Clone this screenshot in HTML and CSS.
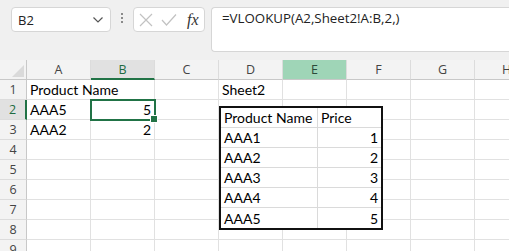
FILE: index.html
```html
<!DOCTYPE html>
<html>
<head>
<meta charset="utf-8">
<link rel="stylesheet" href="styles.css">
</head>
<body>
<div class="topbar">
  <div class="namebox">
    <span class="name">B2</span>
    <svg class="chev" width="12" height="8" viewBox="0 0 12 8"><path d="M1.5 1.5 L6 6 L10.5 1.5" fill="none" stroke="#555" stroke-width="1.2"/></svg>
  </div>
  <div class="dots"><i></i><i></i><i></i></div>
  <div class="btnbox">
    <svg width="14" height="14" viewBox="0 0 14 14"><path d="M1 1 L13 13 M13 1 L1 13" stroke="#c2c2c2" stroke-width="1.2" fill="none"/></svg>
    <svg width="16" height="14" viewBox="0 0 16 14"><path d="M1 7 L5.5 12 L15 1.5" stroke="#c2c2c2" stroke-width="1.2" fill="none"/></svg>
    <span class="fx">fx</span>
  </div>
  <div class="formula">=VLOOKUP(A2,Sheet2!A:B,2,)</div>
</div>
<div class="sheet">
  <div class="grid">
    <div class="hd corner"><span class="tri"></span></div>
    <div class="hd">A</div>
    <div class="hd selcol">B</div>
    <div class="hd">C</div>
    <div class="hd">D</div>
    <div class="hd hl">E</div>
    <div class="hd">F</div>
    <div class="hd">G</div>
    <div class="hd">H</div>

    <div class="rh">1</div>
    <div class="c ov">Product Name</div><div class="c"></div><div class="c"></div><div class="c">Sheet2</div><div class="c"></div><div class="c"></div><div class="c"></div><div class="c"></div>

    <div class="rh selrow">2</div>
    <div class="c">AAA5</div><div class="c num sel">5<span class="handle"></span></div><div class="c"></div><div class="c"></div><div class="c"></div><div class="c"></div><div class="c"></div><div class="c"></div>

    <div class="rh">3</div>
    <div class="c">AAA2</div><div class="c num">2</div><div class="c"></div><div class="c"></div><div class="c"></div><div class="c"></div><div class="c"></div><div class="c"></div>

    <div class="rh">4</div>
    <div class="c"></div><div class="c"></div><div class="c"></div><div class="c"></div><div class="c"></div><div class="c"></div><div class="c"></div><div class="c"></div>
    <div class="rh">5</div>
    <div class="c"></div><div class="c"></div><div class="c"></div><div class="c"></div><div class="c"></div><div class="c"></div><div class="c"></div><div class="c"></div>
    <div class="rh">6</div>
    <div class="c"></div><div class="c"></div><div class="c"></div><div class="c"></div><div class="c"></div><div class="c"></div><div class="c"></div><div class="c"></div>
    <div class="rh">7</div>
    <div class="c"></div><div class="c"></div><div class="c"></div><div class="c"></div><div class="c"></div><div class="c"></div><div class="c"></div><div class="c"></div>
    <div class="rh">8</div>
    <div class="c"></div><div class="c"></div><div class="c"></div><div class="c"></div><div class="c"></div><div class="c"></div><div class="c"></div><div class="c"></div>
    <div class="rh">9</div>
    <div class="c"></div><div class="c"></div><div class="c"></div><div class="c"></div><div class="c"></div><div class="c"></div><div class="c"></div><div class="c"></div>
  </div>

  <div class="picture">
    <div class="pc">Product Name</div><div class="pc">Price</div>
    <div class="pc">AAA1</div><div class="pc num">1</div>
    <div class="pc">AAA2</div><div class="pc num">2</div>
    <div class="pc">AAA3</div><div class="pc num">3</div>
    <div class="pc">AAA4</div><div class="pc num">4</div>
    <div class="pc">AAA5</div><div class="pc num">5</div>
  </div>
</div>
</body>
</html>
```

FILE: styles.css
```css
html, body {
  margin: 0;
  padding: 0;
  width: 509px;
  height: 251px;
  overflow: hidden;
  background: #ffffff;
}

.topbar {
  height: 60px;
  background: #f0f0f0;
  display: flex;
  align-items: flex-start;
  box-sizing: border-box;
  padding-top: 7px;
  padding-left: 11px;
  font-family: "Open Sans", "Liberation Sans", sans-serif;
}

.topbar > * {
  flex-shrink: 0;
}

.namebox {
  width: 100px;
  height: 25px;
  box-sizing: border-box;
  background: #ffffff;
  border: 1px solid #d6d6d6;
  border-radius: 4px;
  display: flex;
  align-items: center;
  justify-content: space-between;
  padding: 0 6px 0 6px;
}

.name {
  font-size: 13px;
  color: #222;
}

.dots {
  width: 22px;
  display: flex;
  flex-direction: column;
  align-items: center;
  gap: 2px;
  padding-top: 6px;
}

.dots i {
  display: block;
  width: 2px;
  height: 2px;
  background: #8a8a8a;
}

.btnbox {
  width: 72px;
  height: 25px;
  box-sizing: border-box;
  background: #ffffff;
  border: 1px solid #d6d6d6;
  border-radius: 4px;
  display: flex;
  align-items: center;
  gap: 8px;
  padding-left: 5px;
}

.fx {
  font-family: "Liberation Serif", "DejaVu Serif", serif;
  font-style: italic;
  font-size: 16px;
  color: #333;
  margin-left: 2px;
}

.formula {
  margin-left: 6px;
  width: 320px;
  height: 45px;
  box-sizing: border-box;
  background: #ffffff;
  border: 1px solid #d6d6d6;
  border-right: none;
  border-radius: 4px 0 0 4px;
  padding: 1px 0 0 10px;
  font-size: 13.3px;
  color: #222;
}

.sheet {
  position: relative;
}

.grid {
  display: grid;
  grid-template-columns: 27px repeat(8, 64px);
  grid-template-rows: 20px repeat(9, 20px);
  font-family: "Lato", "Liberation Sans", sans-serif;
}

.hd {
  background: #f3f3f3;
  border-right: 1px solid #dcdcdc;
  border-bottom: 1px solid #c8c8c8;
  box-sizing: border-box;
  display: flex;
  align-items: center;
  justify-content: center;
  font-family: "Open Sans", "Liberation Sans", sans-serif;
  font-size: 12.5px;
  color: #444;
}

.corner {
  position: relative;
  border-right: 1px solid #c8c8c8;
}

.tri {
  position: absolute;
  right: 2px;
  bottom: 2px;
  width: 0;
  height: 0;
  border-left: 12px solid transparent;
  border-bottom: 12px solid #dadada;
}

.selcol {
  background: #e1e1e1;
  border-bottom: 2px solid #217346;
  color: #1e6b41;
}

.hl {
  background: #9fd5b7;
  color: #2b4a3a;
}

.rh {
  background: #f3f3f3;
  border-right: 1px solid #c8c8c8;
  border-bottom: 1px solid #dcdcdc;
  box-sizing: border-box;
  display: flex;
  align-items: center;
  justify-content: center;
  font-family: "Open Sans", "Liberation Sans", sans-serif;
  font-size: 12.5px;
  color: #444;
}

.selrow {
  background: #e1e1e1;
  border-right: 2px solid #217346;
  color: #1e6b41;
}

.c {
  border-right: 1px solid #e1e1e1;
  border-bottom: 1px solid #e1e1e1;
  box-sizing: border-box;
  font-size: 14px;
  color: #000;
  display: flex;
  align-items: center;
  padding: 0 3px 0 3px;
  white-space: nowrap;
  position: relative;
}

.ov {
  overflow: visible;
  border-right-color: transparent;
  z-index: 1;
}

.num {
  justify-content: flex-end;
}

.sel {
  outline: 2px solid #217346;
  outline-offset: -1px;
  z-index: 2;
}

.handle {
  position: absolute;
  right: -4px;
  bottom: -4px;
  width: 6px;
  height: 6px;
  background: #217346;
  border: 1px solid #ffffff;
}

.picture {
  position: absolute;
  left: 219px;
  top: 46px;
  width: 164px;
  box-sizing: border-box;
  border: 2px solid #111;
  background: #ffffff;
  display: grid;
  grid-template-columns: 97px 1fr;
  grid-auto-rows: 20px;
  font-family: "Lato", "Liberation Sans", sans-serif;
  font-size: 14px;
  z-index: 3;
}

.pc {
  border-right: 1px solid #dadada;
  border-bottom: 1px solid #dadada;
  box-sizing: border-box;
  display: flex;
  align-items: center;
  padding: 0 3px;
  white-space: nowrap;
}

.pc:nth-child(2n) {
  border-right: none;
}

.pc:nth-last-child(-n+2) {
  border-bottom: none;
}
```
